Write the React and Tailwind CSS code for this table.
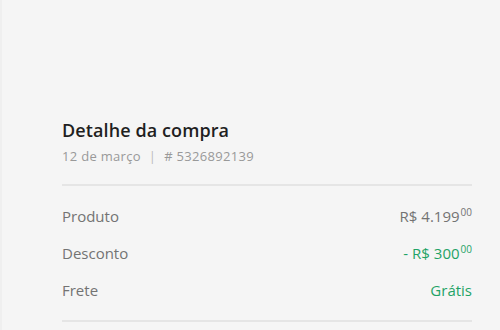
import React from 'react';

const Row = ({ label, children }) => (
  <div className="flex h-[37px] items-center justify-between">
    <span className="text-[15px] text-[#737373]">{label}</span>
    {children}
  </div>
);

const Price = ({ prefix, value, cents, className }) => (
  <span className={`flex items-start text-[15px] ${className}`}>
    {prefix}R$ {value}
    <sup className="ml-[1px] mt-[2px] text-[10px] leading-none top-0">{cents}</sup>
  </span>
);

export default function App() {
  return (
    <div
      className="min-h-[330px] w-[500px] bg-[#f5f5f5] border-l-2 border-[#efefef]"
      style={{ fontFamily: '"Open Sans", sans-serif' }}
    >
      <div className="pl-[60px] pr-[28px] pt-[118px]">
        <h2 className="text-[18px] font-semibold leading-[24px] tracking-[0.1px] text-[#1f1f1f]">
          Detalhe da compra
        </h2>
        <div className="mt-[5px] flex items-center text-[13px] tracking-[0.3px] text-[#999]">
          <span>12 de março</span>
          <span className="mx-[8px] text-[#bbb]">|</span>
          <span># 5326892139</span>
        </div>
        <div className="mt-[17px] h-[2px] bg-[#e5e5e5]" />
        <div className="pt-[12px] pb-[11px]">
          <Row label="Produto">
            <Price value="4.199" cents="00" className="text-[#737373]" />
          </Row>
          <Row label="Desconto">
            <Price prefix="- " value="300" cents="00" className="text-[#1fa366]" />
          </Row>
          <Row label="Frete">
            <span className="text-[15px] text-[#1fa366]">Grátis</span>
          </Row>
        </div>
        <div className="h-[2px] bg-[#e5e5e5]" />
      </div>
    </div>
  );
}
